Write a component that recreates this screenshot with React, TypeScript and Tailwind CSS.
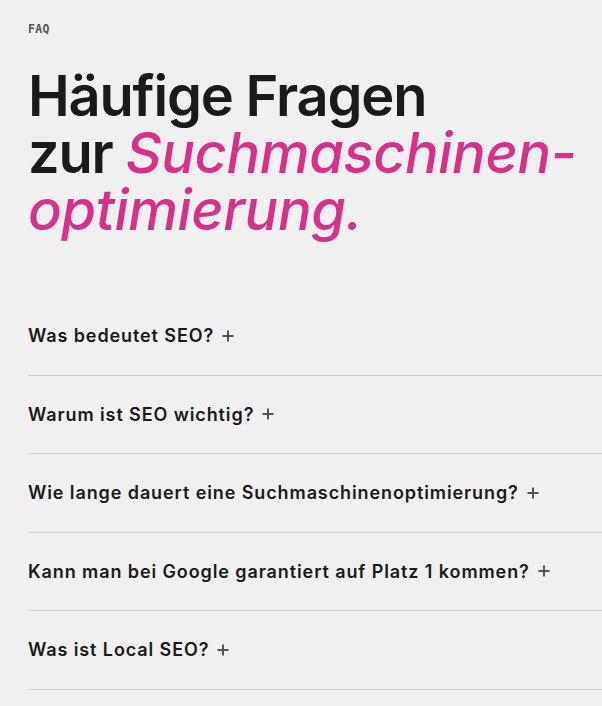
import React from "react";

const questions = [
  "Was bedeutet SEO?",
  "Warum ist SEO wichtig?",
  "Wie lange dauert eine Suchmaschinenoptimierung?",
  "Kann man bei Google garantiert auf Platz 1 kommen?",
  "Was ist Local SEO?",
];

const PlusIcon = () => (
  <svg width="12" height="12" viewBox="0 0 12 12" className="shrink-0 text-[#555]">
    <path d="M6 0.5v11M0.5 6h11" stroke="currentColor" strokeWidth="2" />
  </svg>
);

export default function App() {
  return (
    <div className="min-h-screen w-full overflow-hidden bg-[#f0f0f0] pl-7 pt-[21px] font-['Inter',sans-serif] text-[#1a1a1a]">
      <p className="font-['DejaVu_Sans_Mono',monospace] text-[11.5px] font-bold leading-4 tracking-wide text-[#555]">FAQ</p>

      <h2 className="mt-[31px] text-[56px] font-semibold leading-[57px] tracking-[-1.2px]">
        Häufige Fragen
        <br />
        zur{" "}
        <em className="font-medium tracking-[-0.4px] text-[#d6308a]">
          Suchmaschinen-
          <br />
          optimierung.
        </em>
      </h2>

      <ul className="mt-[58px]">
        {questions.map((q) => (
          <li key={q} className="border-b border-[#cfcfcf]">
            <button className="flex items-center gap-2 py-[28px] text-left text-[18px] font-semibold leading-[21.5px] tracking-[0.9px]">
              <span>{q}</span>
              <PlusIcon />
            </button>
          </li>
        ))}
      </ul>
    </div>
  );
}
